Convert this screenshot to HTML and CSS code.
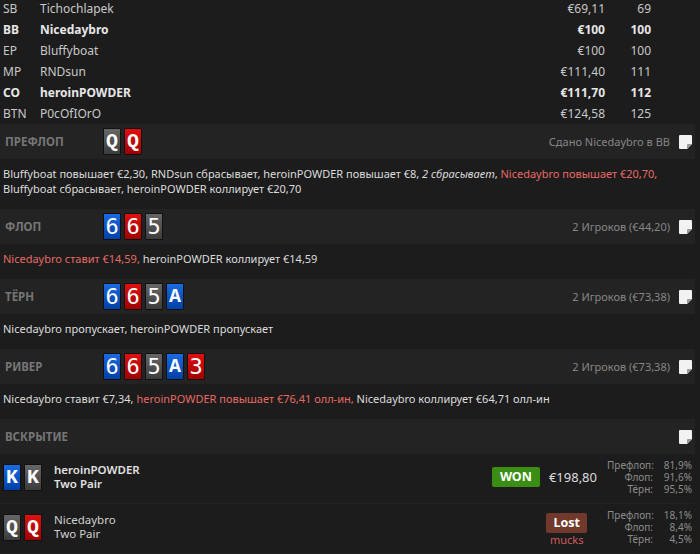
FILE: index.html
```html
<!DOCTYPE html>
<html>

<head>
	<title>Раздача</title>
	<link rel="stylesheet" href="styles.css">
</head>

<body>
	<div class="hand">
		<div class="seats">
			<div class="seat"><span>SB</span><span>Tichochlapek</span><span class="num">€69,11</span><span class="num">69</span></div>
			<div class="seat hero"><span>BB</span><span>Nicedaybro</span><span class="num">€100</span><span class="num">100</span></div>
			<div class="seat"><span>EP</span><span>Bluffyboat</span><span class="num">€100</span><span class="num">100</span></div>
			<div class="seat"><span>MP</span><span>RNDsun</span><span class="num">€111,40</span><span class="num">111</span></div>
			<div class="seat hero"><span>CO</span><span>heroinPOWDER</span><span class="num">€111,70</span><span class="num">112</span></div>
			<div class="seat"><span>BTN</span><span>P0cOfIOrO</span><span class="num">€124,58</span><span class="num">125</span></div>
		</div>

		<div class="street">
			<div class="street-name">ПРЕФЛОП</div>
			<div class="cards">
				<span class="card gray q">Q</span>
				<span class="card red q">Q</span>
			</div>
			<div class="street-info">Сдано Nicedaybro в BB</div>
			<svg class="note" width="13" height="14" viewBox="0 0 13 14"><path d="M1 0H12Q13 0 13 1V9L8 14H1Q0 14 0 13V1Q0 0 1 0Z" fill="#f2f2f2"/><path d="M13 9H9Q8 9 8 10V14Z" fill="#9a9a9a"/></svg>
		</div>
		<div class="actions">Bluffyboat повышает €2,30, RNDsun сбрасывает, heroinPOWDER повышает €8, <i>2 сбрасывает</i>, <span class="me">Nicedaybro повышает €20,70,</span> Bluffyboat сбрасывает, heroinPOWDER коллирует €20,70</div>

		<div class="street">
			<div class="street-name">ФЛОП</div>
			<div class="cards">
				<span class="card blue">6</span>
				<span class="card red">6</span>
				<span class="card gray">5</span>
			</div>
			<div class="street-info">2 Игроков (€44,20)</div>
			<svg class="note" width="13" height="14" viewBox="0 0 13 14"><path d="M1 0H12Q13 0 13 1V9L8 14H1Q0 14 0 13V1Q0 0 1 0Z" fill="#f2f2f2"/><path d="M13 9H9Q8 9 8 10V14Z" fill="#9a9a9a"/></svg>
		</div>
		<div class="actions"><span class="me">Nicedaybro ставит €14,59,</span> heroinPOWDER коллирует €14,59</div>

		<div class="street">
			<div class="street-name">ТЁРН</div>
			<div class="cards">
				<span class="card blue">6</span>
				<span class="card red">6</span>
				<span class="card gray">5</span>
				<span class="card blue q">A</span>
			</div>
			<div class="street-info">2 Игроков (€73,38)</div>
			<svg class="note" width="13" height="14" viewBox="0 0 13 14"><path d="M1 0H12Q13 0 13 1V9L8 14H1Q0 14 0 13V1Q0 0 1 0Z" fill="#f2f2f2"/><path d="M13 9H9Q8 9 8 10V14Z" fill="#9a9a9a"/></svg>
		</div>
		<div class="actions">Nicedaybro пропускает, heroinPOWDER пропускает</div>

		<div class="street">
			<div class="street-name">РИВЕР</div>
			<div class="cards">
				<span class="card blue">6</span>
				<span class="card red">6</span>
				<span class="card gray">5</span>
				<span class="card blue q">A</span>
				<span class="card red">3</span>
			</div>
			<div class="street-info">2 Игроков (€73,38)</div>
			<svg class="note" width="13" height="14" viewBox="0 0 13 14"><path d="M1 0H12Q13 0 13 1V9L8 14H1Q0 14 0 13V1Q0 0 1 0Z" fill="#f2f2f2"/><path d="M13 9H9Q8 9 8 10V14Z" fill="#9a9a9a"/></svg>
		</div>
		<div class="actions">Nicedaybro ставит €7,34, <span class="op">heroinPOWDER повышает €76,41 олл-ин,</span> Nicedaybro коллирует €64,71 олл-ин</div>

		<div class="street">
			<div class="street-name">ВСКРЫТИЕ</div>
			<div class="street-info"></div>
			<svg class="note" width="13" height="14" viewBox="0 0 13 14"><path d="M1 0H12Q13 0 13 1V9L8 14H1Q0 14 0 13V1Q0 0 1 0Z" fill="#f2f2f2"/><path d="M13 9H9Q8 9 8 10V14Z" fill="#9a9a9a"/></svg>
		</div>

		<div class="showdown winner">
			<div class="cards">
				<span class="card blue q">K</span>
				<span class="card gray q">K</span>
			</div>
			<div class="player">
				<div>heroinPOWDER</div>
				<div class="combo">Two Pair</div>
			</div>
			<div class="result">
				<span class="badge won">WON</span>
				<span class="amount">€198,80</span>
			</div>
			<div class="equity">
				<span>Префлоп:</span><span>81,9%</span>
				<span>Флоп:</span><span>91,6%</span>
				<span>Тёрн:</span><span>95,5%</span>
			</div>
		</div>
		<div class="showdown">
			<div class="cards">
				<span class="card gray q">Q</span>
				<span class="card red q">Q</span>
			</div>
			<div class="player">
				<div>Nicedaybro</div>
				<div class="combo">Two Pair</div>
			</div>
			<div class="result lost-box">
				<span class="badge lost">Lost</span>
				<span class="mucks">mucks</span>
			</div>
			<div class="equity">
				<span>Префлоп:</span><span>18,1%</span>
				<span>Флоп:</span><span>8,4%</span>
				<span>Тёрн:</span><span>4,5%</span>
			</div>
		</div>
	</div>
</body>

</html>
```

FILE: styles.css
```css
body {
	margin: 0;
	background: #1c1c1c;
	color: #d8d8d8;
	font-family: "Noto Sans", sans-serif;
	font-size: 12px;
	overflow: hidden;
}

.hand {
	width: 695px;
	margin-top: -2px;
}

.seats {
	padding: 0 44px 0 3px;
}

.seat {
	display: grid;
	grid-template-columns: 37px 1fr 90px 46px;
	height: 21px;
	line-height: 21px;
	color: #c8c8c8;
}

.seat.hero {
	font-weight: bold;
	color: #e6e6e6;
}

.num {
	text-align: right;
}

.street {
	display: flex;
	align-items: center;
	height: 35px;
	padding: 0 3px 0 5px;
	background: #232323;
}

.street-name {
	width: 98px;
	color: #767676;
	font-weight: bold;
	font-size: 11.5px;
}

.cards {
	display: flex;
	gap: 3px;
}

.card {
	display: inline-block;
	width: 16px;
	height: 25px;
	border: 1px solid #111;
	border-radius: 1px;
	color: #fff;
	font-family: "DejaVu Sans Mono", monospace;
	font-size: 22px;
	line-height: 25px;
	text-align: center;
}

.card.q {
	font-family: "Liberation Mono", monospace;
	font-weight: bold;
	font-size: 20px;
}

.card.blue {
	background: linear-gradient(#1a6ae0, #0040a8);
}

.card.red {
	background: linear-gradient(#e01010, #a00000);
}

.card.gray {
	background: linear-gradient(#666, #3c3c3c);
}

.street-info {
	margin-left: auto;
	color: #868686;
	font-size: 11px;
}

.note {
	margin-left: 9px;
}

.actions {
	padding: 7px 3px 13px;
	font-size: 11px;
	line-height: 15px;
	color: #dcdcdc;
}

.me,
.op {
	color: #e86a66;
}

.showdown {
	display: flex;
	align-items: center;
	height: 46px;
	padding: 0 3px 3px;
	border-bottom: 1px solid #222;
}

.player {
	margin-left: 12px;
	font-size: 11.5px;
	line-height: 14px;
	color: #d0d0d0;
}

.winner .player {
	font-weight: 600;
	color: #e0e0e0;
}

.showdown:not(.winner) .combo {
	font-weight: normal;
}

.result {
	margin-left: auto;
	display: flex;
	align-items: center;
	gap: 9px;
}

.lost-box {
	flex-direction: column;
	gap: 1px;
	margin-top: 4px;
	margin-right: 10px;
}

.badge {
	color: #fff;
	font-weight: bold;
	font-size: 12.5px;
	padding: 0 8px;
	height: 20px;
	line-height: 20px;
	border-radius: 2px;
}

.won {
	background: #3b8d14;
}

.lost {
	background: #70392b;
	padding: 0 7px;
}

.mucks {
	color: #cf5c5c;
	font-size: 11px;
	line-height: 12px;
}

.amount {
	font-size: 13px;
	color: #dcdcdc;
}

.equity {
	display: grid;
	grid-template-columns: 46px 35px;
	column-gap: 4px;
	margin-left: 10px;
	font-size: 10px;
	line-height: 12px;
	color: #8c8c8c;
	text-align: right;
}
```
